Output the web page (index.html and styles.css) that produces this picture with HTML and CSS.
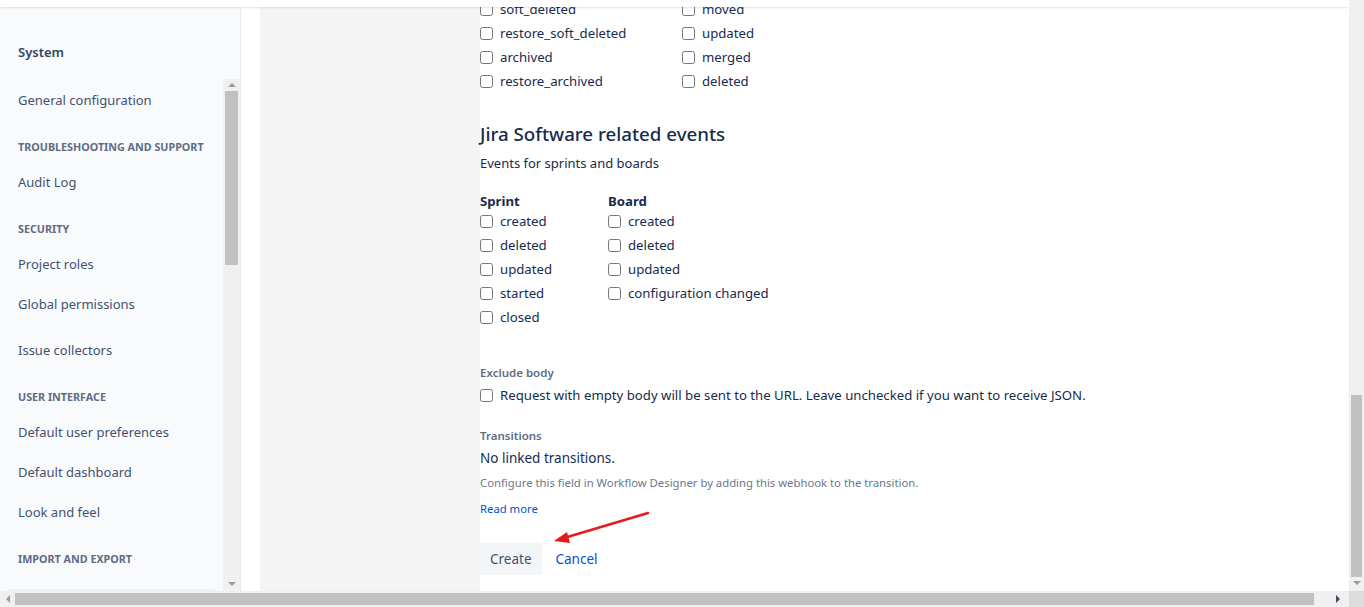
FILE: index.html
```html
<!DOCTYPE html>
<html>
<head>
    <title>Create webhook</title>
    <link rel="stylesheet" href="styles.css">
</head>
<body>
    <div class="page">
        <div class="frame">
            <div class="content">
                <div class="topbar"></div>
                <div class="layout">
                    <div class="sidebar">
                        <div class="side-nav">
                            <div class="side-title">System</div>
                            <a class="side-item">General configuration</a>
                            <div class="side-heading">TROUBLESHOOTING AND SUPPORT</div>
                            <a class="side-item">Audit Log</a>
                            <div class="side-heading">SECURITY</div>
                            <a class="side-item">Project roles</a>
                            <a class="side-item">Global permissions</a>
                            <a class="side-item side-sep">Issue collectors</a>
                            <div class="side-heading">USER INTERFACE</div>
                            <a class="side-item">Default user preferences</a>
                            <a class="side-item">Default dashboard</a>
                            <a class="side-item">Look and feel</a>
                            <div class="side-heading">IMPORT AND EXPORT</div>
                        </div>
                        <div class="side-scroll">
                            <div class="sb-arrow up"></div>
                            <div class="side-thumb"></div>
                            <div class="side-track"></div>
                            <div class="sb-arrow down"></div>
                        </div>
                    </div>
                    <div class="spacer"></div>
                    <div class="grey-panel"></div>
                    <div class="main">
                        <div class="events">
                            <div class="event-col wide">
                                <label class="check"><input type="checkbox"> soft_deleted</label>
                                <label class="check"><input type="checkbox"> restore_soft_deleted</label>
                                <label class="check"><input type="checkbox"> archived</label>
                                <label class="check"><input type="checkbox"> restore_archived</label>
                            </div>
                            <div class="event-col">
                                <label class="check"><input type="checkbox"> moved</label>
                                <label class="check"><input type="checkbox"> updated</label>
                                <label class="check"><input type="checkbox"> merged</label>
                                <label class="check"><input type="checkbox"> deleted</label>
                            </div>
                        </div>

                        <h2 class="section-title">Jira Software related events</h2>
                        <div class="section-desc">Events for sprints and boards</div>

                        <div class="events groups">
                            <div class="event-col narrow">
                                <div class="group-title">Sprint</div>
                                <label class="check"><input type="checkbox"> created</label>
                                <label class="check"><input type="checkbox"> deleted</label>
                                <label class="check"><input type="checkbox"> updated</label>
                                <label class="check"><input type="checkbox"> started</label>
                                <label class="check"><input type="checkbox"> closed</label>
                            </div>
                            <div class="event-col">
                                <div class="group-title">Board</div>
                                <label class="check"><input type="checkbox"> created</label>
                                <label class="check"><input type="checkbox"> deleted</label>
                                <label class="check"><input type="checkbox"> updated</label>
                                <label class="check"><input type="checkbox"> configuration changed</label>
                            </div>
                        </div>

                        <div class="field-label exclude">Exclude body</div>
                        <label class="check single"><input type="checkbox"> Request with empty body will be sent to the URL. Leave unchecked if you want to receive JSON.</label>

                        <div class="field-label transitions">Transitions</div>
                        <div class="field-value">No linked transitions.</div>
                        <div class="help">Configure this field in Workflow Designer by adding this webhook to the transition.</div>
                        <a class="read-more">Read more</a>

                        <div class="actions">
                            <button class="btn">Create</button>
                            <a class="cancel">Cancel</a>
                        </div>
                    </div>
                </div>
                <svg class="annotation" width="110" height="40" viewBox="0 0 110 40">
                    <line x1="98" y1="3" x2="14" y2="28" stroke="#e8191a" stroke-width="2.4" stroke-linecap="round"/>
                    <polygon points="4,31 17,22 20,33" fill="#e8191a"/>
                </svg>
            </div>
            <div class="vscroll">
                <div class="vtrack"></div>
                <div class="vthumb"></div>
                <div class="sb-arrow down"></div>
            </div>
        </div>
        <div class="hscroll">
            <div class="sb-arrow left"></div>
            <div class="hthumb"></div>
            <div class="sb-arrow right"></div>
            <div class="corner"></div>
        </div>
    </div>
</body>
</html>
```

FILE: styles.css
```css
body {
    margin: 0;
    height: 100vh;
    overflow: hidden;
    font-family: "Noto Sans", "Open Sans", sans-serif;
    color: #172b4d;
    background-color: #fff;
}

.page {
    display: flex;
    flex-direction: column;
    height: 100vh;
}

.frame {
    display: flex;
    flex: 1;
    min-height: 0;
}

.content {
    flex: 1;
    position: relative;
    overflow: hidden;
}

.topbar {
    position: absolute;
    top: 0;
    left: 0;
    right: 0;
    height: 7px;
    background-color: #fff;
    box-shadow: 0 1px 2px rgba(9, 30, 66, 0.12);
    z-index: 2;
}

.layout {
    display: flex;
    height: 100%;
}

/* sidebar */
.sidebar {
    width: 240px;
    display: flex;
    background-color: #f9fafc;
    border-right: 1px solid #e9e9e9;
}

.side-nav {
    flex: 1;
    padding: 32px 0 0 18px;
    overflow: hidden;
    position: relative;
}

.side-nav::after {
    content: "";
    position: absolute;
    left: 8px;
    width: 207px;
    bottom: 0;
    height: 2px;
    background-color: #eff0f2;
}

.side-title {
    height: 40px;
    line-height: 40px;
    font-size: 13px;
    font-weight: 600;
    color: #344563;
    margin-bottom: 8px;
}

.side-item {
    display: block;
    height: 40px;
    line-height: 40px;
    font-size: 13px;
    color: #42526e;
    white-space: nowrap;
}

.side-sep {
    margin-top: 6px;
}

.side-heading {
    height: 20px;
    line-height: 20px;
    margin: 17px 0 5px;
    font-size: 10.75px;
    font-weight: 700;
    color: #5e6c84;
    white-space: nowrap;
}

.side-scroll {
    width: 17px;
    margin-top: 79px;
    background-color: #f0f0f0;
    display: flex;
    flex-direction: column;
    align-items: center;
}

.side-thumb {
    width: 13px;
    height: 174px;
    background-color: #c1c1c1;
}

.side-track {
    flex: 1;
}

.spacer {
    width: 19px;
    background-color: #fff;
}

.grey-panel {
    width: 220px;
    background-color: #f4f4f4;
}

/* main form */
.main {
    flex: 1;
    background-color: #fff;
    margin-top: -3px;
    font-size: 13.2px;
    color: #172b4d;
}

.events {
    display: flex;
}

.event-col {
    display: flex;
    flex-direction: column;
}

.event-col.wide {
    width: 202px;
}

.event-col.narrow {
    width: 128px;
}

.check {
    display: flex;
    align-items: center;
    height: 24px;
    white-space: nowrap;
}

.check input {
    width: 13px;
    height: 13px;
    margin: 0 7px 0 0;
}

.section-title {
    margin: 29px 0 0;
    font-size: 18.7px;
    font-weight: 500;
    line-height: 24px;
    color: #172b4d;
}

.section-desc {
    margin-top: 7px;
    line-height: 20px;
    font-size: 13px;
    color: #172b4d;
}

.groups {
    margin-top: 20px;
}

.group-title {
    height: 16px;
    line-height: 16px;
    font-weight: 700;
    font-size: 13.2px;
}

.field-label {
    height: 16px;
    line-height: 16px;
    font-size: 11.5px;
    font-weight: 600;
    color: #5e6c84;
}

.field-label.exclude {
    margin-top: 36px;
    margin-bottom: 2px;
}

.field-label.transitions {
    margin-top: 21px;
}

.field-value {
    margin-top: 4px;
    line-height: 20px;
    font-size: 13.5px;
}

.help {
    margin-top: 7px;
    line-height: 16px;
    font-size: 11.3px;
    color: #6b778c;
}

.read-more {
    display: block;
    margin-top: 10px;
    line-height: 16px;
    font-size: 11.3px;
    color: #0052cc;
}

.actions {
    display: flex;
    align-items: center;
    margin-top: 26px;
}

.btn {
    height: 32px;
    padding: 0 10px;
    border: none;
    border-radius: 3px;
    background-color: #f4f5f7;
    font-family: inherit;
    font-size: 13.5px;
    color: #42526e;
}

.cancel {
    margin-left: 14px;
    font-size: 13.5px;
    color: #0052cc;
}

.annotation {
    position: absolute;
    left: 550px;
    top: 510px;
}

/* fake window scrollbars */
.vscroll {
    width: 15px;
    background-color: #f0f0f0;
    display: flex;
    flex-direction: column;
    align-items: center;
}

.vtrack {
    height: 395px;
}

.vthumb {
    width: 11px;
    height: 182px;
    background-color: #c1c1c1;
}

.hscroll {
    height: 16px;
    display: flex;
    align-items: center;
    background-color: #f0f0f0;
}

.hthumb {
    width: 1299px;
    height: 12px;
    margin-left: 5px;
    background-color: #c1c1c1;
}

.corner {
    width: 15px;
    height: 16px;
    margin-left: auto;
    background-color: #dcdcdc;
}

.sb-arrow {
    width: 0;
    height: 0;
    border-style: solid;
    border-color: transparent;
}

.sb-arrow.up {
    margin: 4px 0 4px;
    border-width: 0 4px 4px;
    border-bottom-color: #a3989b;
}

.sb-arrow.down {
    margin: 4px 0 5px;
    border-width: 4px 4px 0;
    border-top-color: #a3989b;
}

.sb-arrow.left {
    margin-left: 6px;
    border-width: 4px 4px 4px 0;
    border-right-color: #a3989b;
}

.sb-arrow.right {
    margin-left: 22px;
    border-width: 4px 0 4px 4px;
    border-left-color: #404a60;
}
```
